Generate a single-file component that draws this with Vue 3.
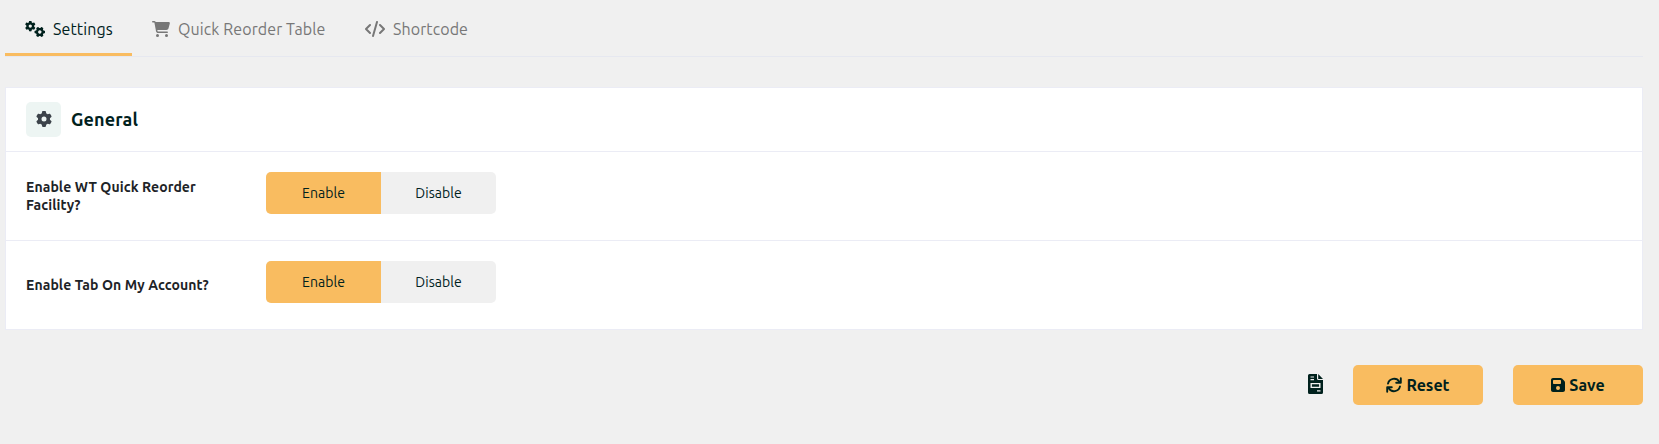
<script setup>
import { ref } from 'vue'

const gear = 'M495.9 166.6c3.2 8.7 .5 18.4-6.4 24.6l-43.3 39.4c1.1 8.3 1.7 16.8 1.7 25.4s-.6 17.1-1.7 25.4l43.3 39.4c6.9 6.2 9.6 15.9 6.4 24.6c-4.4 11.9-9.7 23.3-15.8 34.3l-4.7 8.1c-6.6 11-14 21.4-22.1 31.2c-5.9 7.2-15.7 9.6-24.5 6.8l-55.7-17.7c-13.4 10.3-28.2 18.9-44 25.4l-12.5 57.1c-2 9.1-9 16.3-18.2 17.8c-13.8 2.3-28 3.5-42.5 3.5s-28.7-1.2-42.5-3.5c-9.2-1.5-16.2-8.7-18.2-17.8l-12.5-57.1c-15.8-6.5-30.6-15.1-44-25.4L83.1 425.9c-8.8 2.8-18.6 .3-24.5-6.8c-8.1-9.8-15.5-20.2-22.1-31.2l-4.7-8.1c-6.1-11-11.4-22.4-15.8-34.3c-3.2-8.7-.5-18.4 6.4-24.6l43.3-39.4C64.6 273.1 64 264.6 64 256s.6-17.1 1.7-25.4L22.4 191.2c-6.9-6.2-9.6-15.9-6.4-24.6c4.4-11.9 9.7-23.3 15.8-34.3l4.7-8.1c6.6-11 14-21.4 22.1-31.2c5.9-7.2 15.7-9.6 24.5-6.8l55.7 17.7c13.4-10.3 28.2-18.9 44-25.4l12.5-57.1c2-9.1 9-16.3 18.2-17.8C227.3 1.2 241.5 0 256 0s28.7 1.2 42.5 3.5c9.2 1.5 16.2 8.7 18.2 17.8l12.5 57.1c15.8 6.5 30.6 15.1 44 25.4l55.7-17.7c8.8-2.8 18.6-.3 24.5 6.8c8.1 9.8 15.5 20.2 22.1 31.2l4.7 8.1c6.1 11 11.4 22.4 15.8 34.3zM256 336a80 80 0 1 0 0-160 80 80 0 1 0 0 160z'

const tab = ref('settings')
const rows = ref([
  { id: 'facility', label: 'Enable WT Quick Reorder Facility?', on: true },
  { id: 'account', label: 'Enable Tab On My Account?', on: true },
])
</script>

<template>
  <main class="page">
    <nav class="tabs">
      <button class="tab t-settings" :class="{ active: tab === 'settings' }" @click="tab = 'settings'">
        <svg class="ico" width="20" height="16" viewBox="0 0 640 512" fill="currentColor">
          <g transform="translate(0 -5) scale(.66)"><path :d="gear" fill-rule="evenodd" /></g>
          <g transform="translate(473 351) rotate(30) scale(.66) translate(-256 -256)"><path :d="gear" fill-rule="evenodd" /></g>
        </svg>
        <span>Settings</span>
      </button>
      <button class="tab t-table" :class="{ active: tab === 'table' }" @click="tab = 'table'">
        <svg class="ico" width="18" height="16" viewBox="0 0 576 512" fill="currentColor">
          <path d="M0 24C0 10.7 10.7 0 24 0H69.5c22 0 41.5 12.8 50.6 32h411c26.3 0 45.5 25 38.6 50.4l-41 152.3c-8.5 31.4-37 53.3-69.5 53.3H170.7l5.4 28.5c2.2 11.3 12.1 19.5 23.6 19.5H488c13.3 0 24 10.7 24 24s-10.7 24-24 24H199.7c-34.6 0-64.3-24.6-70.7-58.5L77.4 54.5c-.7-3.8-4-6.5-7.9-6.5H24C10.7 48 0 37.3 0 24zM128 464a48 48 0 1 1 96 0 48 48 0 1 1 -96 0zm336-48a48 48 0 1 1 0 96 48 48 0 1 1 0-96z" />
        </svg>
        <span>Quick Reorder Table</span>
      </button>
      <button class="tab t-code" :class="{ active: tab === 'code' }" @click="tab = 'code'">
        <svg class="ico" width="20" height="16" viewBox="0 0 20 16" fill="none" stroke="currentColor" stroke-width="2" stroke-linecap="round" stroke-linejoin="round">
          <path d="M5 4 1 8l4 4M15 4l4 4-4 4M12 1 8 15" />
        </svg>
        <span>Shortcode</span>
      </button>
    </nav>

    <section class="card">
      <header class="head">
        <span class="badge">
          <svg width="16" height="16" viewBox="0 0 512 512" fill="currentColor"><path :d="gear" fill-rule="evenodd" /></svg>
        </span>
        <h2>General</h2>
      </header>
      <div v-for="r in rows" :key="r.id" class="row">
        <div class="label">{{ r.label }}</div>
        <div class="switch">
          <button :class="{ on: r.on }" @click="r.on = true">Enable</button>
          <button :class="{ on: !r.on }" @click="r.on = false">Disable</button>
        </div>
      </div>
    </section>

    <footer class="actions">
      <svg class="doc" width="15" height="20" viewBox="0 0 15 20">
        <path fill="#00211d" fill-rule="evenodd" d="M1.5 0H9v4.500q0 1.500 1.500 1.500H15v12.500q0 1.500-1.500 1.500h-12Q0 20 0 18.500v-17Q0 0 1.500 0zM10.200 0 15 4.900h-4.800zM2.500 2.400v1.200H6V2.400zm0 2.600v1.200H6V5zM2.500 9v5h10V9zm1.400 1.300h7.200v2.400H3.900zM9 16.300v1.200h3.500v-1.200z" />
      </svg>
      <button class="btn reset">
        <svg width="16" height="16" viewBox="0 0 16 16" fill="none" stroke="currentColor" stroke-width="1.900" stroke-linecap="round" stroke-linejoin="round">
          <path d="M2 6.600A6.200 6.200 0 0 1 13.300 4.700M14 9.400A6.200 6.200 0 0 1 2.700 11.300" />
          <path d="M14.800 1.200v4.600h-4.600M1.200 14.800v-4.600h4.600" />
        </svg>
        <span>Reset</span>
      </button>
      <button class="btn save">
        <svg width="14" height="16" viewBox="0 0 448 512" fill="currentColor">
          <path d="M64 32C28.700 32 0 60.700 0 96V416c0 35.300 28.700 64 64 64H384c35.300 0 64-28.700 64-64V173.300c0-17-6.700-33.300-18.700-45.300L352 50.700C340 38.700 323.700 32 306.700 32H64zm0 96c0-17.700 14.300-32 32-32H288c17.700 0 32 14.300 32 32v64c0 17.700-14.300 32-32 32H96c-17.700 0-32-14.300-32-32V128zM224 288a64 64 0 1 1 0 128 64 64 0 1 1 0-128z" fill-rule="evenodd" />
        </svg>
        <span>Save</span>
      </button>
    </footer>
  </main>
</template>

<style>
body { background: #f0f0f0; }
</style>

<style scoped>
.page {
  box-sizing: border-box;
  height: 444px;
  padding: 0 16px 0 5px;
  background: #f0f0f0;
  color: #00211d;
  font-family: Ubuntu, "Noto Sans", sans-serif;
  overflow: hidden;
}
button {
  box-sizing: border-box;
  margin: 0;
  padding: 0;
  border: 0;
  background: none;
  color: inherit;
  font: inherit;
  cursor: pointer;
}
span { white-space: nowrap; }
svg { flex: none; }

.tabs {
  box-sizing: border-box;
  display: flex;
  height: 57px;
  border-bottom: 1px solid #e6e8f0;
}
.tab {
  display: flex;
  align-items: center;
  gap: 8px;
  height: 56px;
  padding: 4px 19px 0 20px;
  border-bottom: 3px solid transparent;
  color: #777;
  font-size: 16px;
  letter-spacing: 0.1px;
}
.tab.active { border-bottom-color: #f9bc60; color: #00211d; }
.tab .ico { margin-top: 1px; }
.t-settings { width: 127px; }
.t-table { width: 213px; }
.t-code { width: 142px; }

.card {
  box-sizing: border-box;
  height: 243px;
  margin-top: 30px;
  border: 1px solid #ebecf5;
  background: #fff;
}
.head {
  display: flex;
  align-items: center;
  box-sizing: border-box;
  height: 63px;
  padding: 0 20px;
}
.badge {
  display: grid;
  place-items: center;
  width: 35px;
  height: 35px;
  margin-top: -1px;
  border-radius: 5px;
  background: #edf5f3;
  color: #3c434a;
}
h2 {
  margin: -2px 0 0 10px;
  font-size: 18px;
  font-weight: 700;
  line-height: 24px;
  letter-spacing: 0.12px;
}
.row {
  display: flex;
  align-items: center;
  box-sizing: border-box;
  height: 89px;
  padding-left: 20px;
  border-top: 1px solid #ebecf5;
}
.label {
  width: 190px;
  margin-right: 50px;
  color: #1d2327;
  font-size: 14px;
  font-weight: 700;
  line-height: 18px;
  letter-spacing: 0.09px;
}
.switch {
  display: flex;
  width: 230px;
  height: 42px;
  margin-bottom: 6px;
  border-radius: 5px;
  background: #f0f0f0;
  overflow: hidden;
}
.switch button { flex: 1; font-size: 14px; letter-spacing: 0.05px; }
.switch .on { background: #f9bc60; }

.actions {
  display: flex;
  justify-content: flex-end;
  align-items: center;
  height: 40px;
  margin-top: 35px;
}
.doc { margin: -2px 30px 0 0; }
.btn {
  display: flex;
  align-items: center;
  justify-content: center;
  gap: 4px;
  width: 130px;
  height: 40px;
  border-radius: 5px;
  background: #f9bc60;
  font-size: 16px;
  font-weight: 700;
}
.save { margin-left: 30px; }
</style>
